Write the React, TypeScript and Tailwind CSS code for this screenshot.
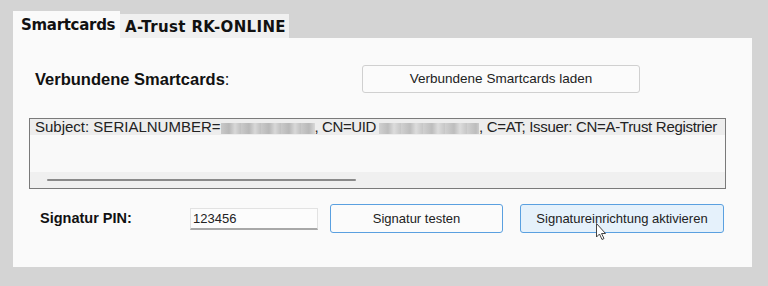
import React from "react";

export default function App() {
  const arial = { fontFamily: '"Liberation Sans", Arial, sans-serif' };
  const tabFont = { fontFamily: '"DejaVu Sans", Verdana, sans-serif' };
  return (
    <div className="w-[768px] h-[286px] bg-[#d4d4d4] pt-[12px] pl-[13px] pr-[16px]" style={arial}>
      <div className="flex items-end h-[26px]">
        <div
          className="w-[107px] h-[27px] bg-[#fafafa] pl-[8px] pt-[3px] text-[15px] tracking-[-0.3px] font-bold text-[#111] relative z-10"
          style={tabFont}
        >
          Smartcards
        </div>
        <div
          className="w-[169px] h-[24px] bg-[#f0f0f0] pl-[5px] pt-[2px] text-[15px] tracking-[0.35px] font-bold text-[#111]"
          style={tabFont}
        >
          A-Trust RK-ONLINE
        </div>
      </div>
      <div className="w-[739px] h-[229px] bg-[#fafafa] pt-[27px] pl-[16px]">
        <div className="flex items-center h-[28px]">
          <div className="w-[333px] pl-[6px] text-[16.5px] text-[#111]">
            <span className="font-bold">Verbundene Smartcards</span>:
          </div>
          <div className="w-[278px] h-[28px] border border-[#d0d0d0] rounded-[3px] bg-[#fbfbfb] flex items-center justify-center text-[13.5px] text-[#222]">
            Verbundene Smartcards laden
          </div>
        </div>
        <div className="mt-[25px] w-[697px] h-[71px] border border-[#7a7a7a] bg-[#f9f9f9] flex flex-col">
          <div className="h-[16px] bg-[#ededed] text-[15px] leading-[16px] text-[#222] pl-[5px] whitespace-nowrap overflow-hidden">
            Subject: SERIALNUMBER=
            <span className="inline-block w-[94px] h-[11px] align-middle bg-[repeating-linear-gradient(90deg,#c9c9c9_0px,#b8b8b8_8px,#d8d8d8_14px,#c0c0c0_20px)]" />
            <span className="tracking-[-0.4px]">, CN=UID</span>
            <span className="inline-block ml-[3px] w-[100px] h-[11px] align-middle bg-[repeating-linear-gradient(90deg,#d0d0d0_0px,#bdbdbd_9px,#dcdcdc_15px,#c6c6c6_22px)]" />
            <span className="tracking-[-0.3px]">, C=AT; Issuer: CN=A-Trust Registrier</span>
          </div>
          <div className="flex-1" />
          <div className="h-[16px] bg-[#f0f0f0] flex items-center pl-[17px]">
            <div className="w-[309px] h-[2px] bg-[#8a8a8a] rounded-full" />
          </div>
        </div>
        <div className="flex items-center mt-[15px] h-[29px]">
          <div className="w-[161px] pl-[11px] text-[14.5px] font-bold text-[#111]">Signatur PIN:</div>
          <div className="w-[128px] h-[22px] bg-[#fcfcfc] border border-[#e2e2e2] border-b-[#a8a8a8] border-b-[2px] text-[13px] text-[#222] pl-[2px] leading-[19px]">
            123456
          </div>
          <div className="ml-[12px] w-[173px] h-[29px] border border-[#5aa0e0] rounded-[3px] bg-[#fbfbfb] flex items-center justify-center text-[13px] text-[#222]">
            Signatur testen
          </div>
          <div className="ml-[17px] w-[204px] h-[29px] border border-[#5aa0e0] rounded-[3px] bg-[#e5f1fb] flex items-center justify-center text-[13px] text-[#222] relative">
            Signatureinrichtung aktivieren
            <svg className="absolute left-[75px] top-[18px]" width="12" height="18" viewBox="0 0 12 18">
              <path d="M0.5 0.5 L0.5 14 L3.5 11 L6 16.5 L8 15.5 L5.5 10.5 L9.5 10.5 Z" fill="white" stroke="#444" strokeWidth="1" />
            </svg>
          </div>
        </div>
      </div>
    </div>
  );
}
